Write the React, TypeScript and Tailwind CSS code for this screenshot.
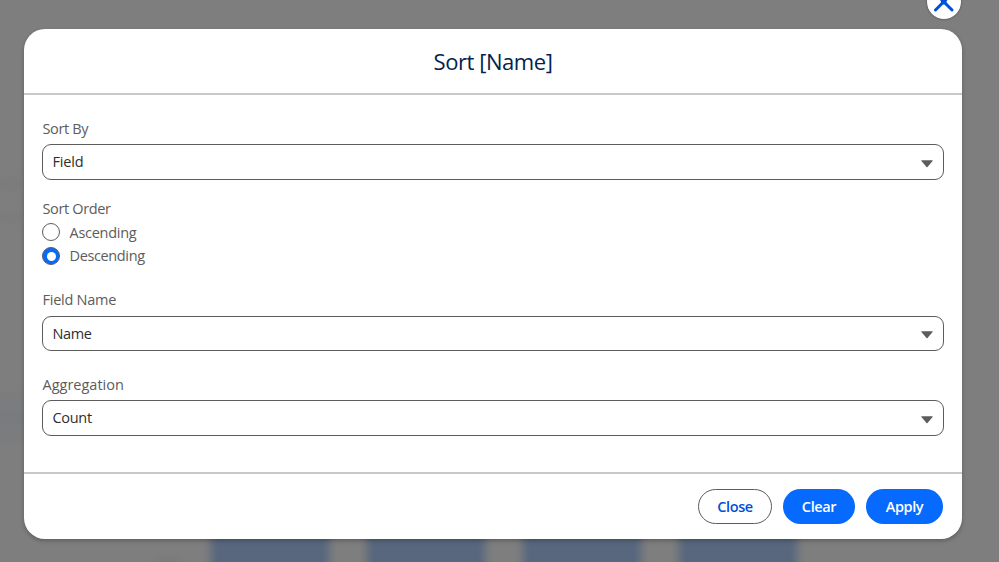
const family = "font-['Open_Sans','Noto_Sans',sans-serif]";

function Backdrop() {
  return (
    <div className="absolute inset-0 overflow-hidden bg-[#7e7e7e]">
      <div className="absolute left-0 top-[180px] h-[8px] w-[24px] bg-[#7b7b7b] blur-[3px]" />
      <div className="absolute left-0 top-[214px] h-[6px] w-[24px] bg-[#7b7b7b] blur-[3px]" />
      <div className="absolute -left-4 top-[400px] h-[34px] w-[56px] bg-[#797b7f] blur-[7px]" />
      <div className="absolute bottom-0 left-[156px] h-1 w-[24px] bg-[#777] blur-[3px]" />
      <div className="absolute left-[211px] top-[480px] flex h-[110px] gap-[38px] blur-[4px]">
        {[0, 1, 2, 3].map((bar) => (
          <div key={bar} className="w-[118px] bg-[#58677e]" />
        ))}
      </div>
    </div>
  );
}

function Label({ text, track }: { text: string; track: string }) {
  return <div className={`h-5 whitespace-nowrap pl-[0.5px] text-[14.5px] leading-5 text-[#5c5c5c] ${track}`}>{text}</div>;
}

function Select({ value, size, track, arrow = "mt-[4px]" }: { value: string; size: string; track: string; arrow?: string }) {
  return (
    <button className={`flex w-full items-center justify-between rounded-[9px] border border-[#5c5c5c] bg-white pl-[9.5px] pr-[10px] ${size}`}>
      <span className={`whitespace-nowrap text-[14.5px] leading-5 text-[#2e2e2e] ${track}`}>{value}</span>
      <svg width="12" height="8" viewBox="0 0 12 8" className={arrow}>
        <path d="M0.7 0.3H11.3Q12 0.3 11.6 0.9L6.5 7Q6 7.5 5.5 7L0.4 0.9Q0 0.3 0.7 0.3Z" fill="#5c5c5c" />
      </svg>
    </button>
  );
}

function Radio({ text, checked, track }: { text: string; checked?: boolean; track: string }) {
  return (
    <div className="flex h-6 items-center gap-[9.5px]">
      <span className={`flex size-[18px] items-center justify-center rounded-full border border-[#5c5c5c] ${checked ? "bg-[#066afe]" : "bg-white"}`}>
        {checked && <span className="size-[9px] rounded-full bg-white" />}
      </span>
      <span className={`whitespace-nowrap text-[14.5px] leading-5 text-[#5c5c5c] ${track}`}>{text}</span>
    </div>
  );
}

export default function App() {
  return (
    <div className={`relative h-[562px] w-[999px] overflow-hidden ${family}`}>
      <Backdrop />
      <button aria-label="Close dialog" className="absolute left-[927px] top-[-15px] flex size-[34px] items-center justify-center rounded-full bg-white shadow-[0_0_2px_#333]">
        <svg width="20" height="20" viewBox="0 0 20 20" fill="none" stroke="#0250d9" strokeWidth="3" strokeLinecap="round">
          <path d="M1.5 1.5L18 18M18 1.5L1.5 18" />
          <circle cx="9.75" cy="9.75" r="2.8" fill="#0250d9" stroke="none" />
        </svg>
      </button>
      <div className="absolute left-[24px] top-[29px] flex h-[510px] w-[938px] flex-col overflow-hidden rounded-[21px] bg-white shadow-[0_2px_4px_rgba(0,0,0,0.25)]">
        <header className="flex h-[66px] items-center justify-center border-b-2 border-[#c9c9c9] pb-px">
          <h1 className="whitespace-nowrap text-[22px] leading-8 tracking-[-0.45px] text-[#03234d]">Sort [Name]</h1>
        </header>
        <main className="flex h-[377px] flex-col px-[18px] pt-[24px]">
          <Label text="Sort By" track="tracking-[-0.35px]" />
          <div className="mt-[5px]"><Select value="Field" size="h-[36px]" track="tracking-[-0.2px]" /></div>
          <div className="mt-[19px]"><Label text="Sort Order" track="tracking-[-0.35px]" /></div>
          <div className="mt-px">
            <Radio text="Ascending" track="tracking-[-0.28px] pt-[2px]" />
            <Radio text="Descending" checked track="tracking-[-0.37px]" />
          </div>
          <div className="mt-[22px]"><Label text="Field Name" track="tracking-[-0.25px]" /></div>
          <div className="mt-[6px]"><Select value="Name" size="h-[35px]" track="tracking-[-0.4px]" arrow="mt-[3px]" /></div>
          <div className="mt-[24px]"><Label text="Aggregation" track="tracking-[0px]" /></div>
          <div className="mt-[5px]"><Select value="Count" size="h-[36px]" track="tracking-[-0.3px]" /></div>
        </main>
        <footer className="flex flex-1 justify-end gap-[11px] border-t-2 border-[#c9c9c9] pr-[19px] pt-[15px] text-[14.5px] font-semibold leading-5 tracking-[-0.4px]">
          <button className="h-[35px] w-[74px] rounded-full border border-[#5c5c5c] text-[#0250d9]">Close</button>
          <button className="h-[35px] w-[72px] rounded-full bg-[#066afe] text-white">Clear</button>
          <button className="h-[35px] w-[77px] rounded-full bg-[#066afe] text-white">Apply</button>
        </footer>
      </div>
    </div>
  );
}
